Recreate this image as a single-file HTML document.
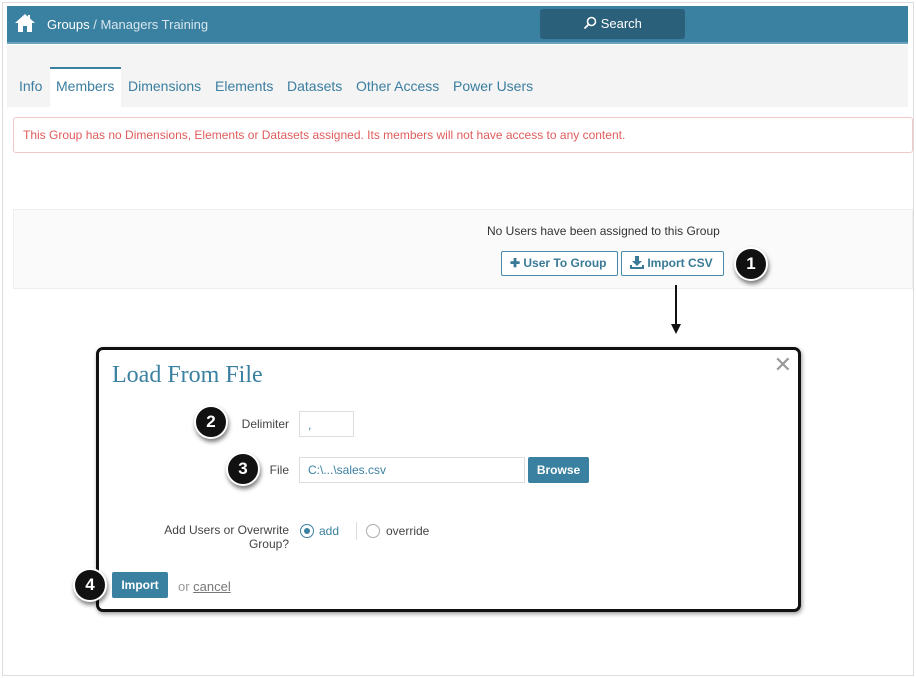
<!DOCTYPE html>
<html><head><style>
*{box-sizing:border-box;margin:0;padding:0}
body{width:916px;height:678px;background:#fff;font-family:"Liberation Sans",sans-serif;position:relative;overflow:hidden}
.frame{position:absolute;left:2px;top:2px;width:912px;height:674px;border:1px solid #ddd}
.hdr{position:absolute;left:7px;top:6px;width:901px;height:38px;background:#3a80a0;border-bottom:2px solid #6aa3bd}
.hdr .t{position:absolute;left:40px;top:11px;color:#fff;font-size:13px}
.hdr .t span{color:#d7e6ee}
.search{position:absolute;left:533px;top:3px;width:145px;height:30px;background:#2a6079;border-radius:3px;color:#fff;font-size:13px;text-align:center;line-height:30px}
.tabs{position:absolute;left:7px;top:45px;width:901px;height:62px;background:#f4f4f4}
.tab{position:absolute;top:33px;font-size:14px;color:#3a7ea0}
.act{position:absolute;left:43px;top:22px;width:71px;height:40px;background:#fff;border-top:2px solid #3a80a0}
.alert{position:absolute;left:13px;top:117px;width:900px;height:36px;border:1px solid #f0c8c8;border-radius:3px;color:#e05c5c;font-size:12px;padding:10px 9px}
.panel{position:absolute;left:13px;top:209px;width:900px;height:80px;background:#fafafa;border:1px solid #eee}
.btn{position:absolute;top:251px;height:25px;border:1px solid #4a8aaa;border-radius:2px;background:#fff;color:#3a7a98;font-size:12px;font-weight:bold;line-height:23px;padding-left:8px}
.num{position:absolute;width:34px;height:34px;border-radius:50%;background:#111;border:2px solid #fff;color:#fff;font-weight:bold;font-size:17px;text-align:center;line-height:30px;box-shadow:1px 3px 4px rgba(0,0,0,.5)}
.modal{position:absolute;left:96px;top:347px;width:705px;height:265px;border:3px solid #111;border-radius:7px;background:#fff;box-shadow:1px 2px 4px rgba(0,0,0,.4)}
.lbl{position:absolute;font-size:12px;color:#444;text-align:right}
.inp{position:absolute;border:1px solid #ddd;background:#fff;font-size:12px;color:#3a80a0}
.blue{position:absolute;background:#3a80a0;color:#fff;font-weight:bold;font-size:12px;text-align:center;border-radius:2px}
</style></head><body>
<div class="frame"></div>
<div class="hdr">
<svg style="position:absolute;left:7px;top:7px" width="22" height="20" viewBox="0 0 22 20"><path d="M11 1 L1 10 L4 10 L4 19 L9 19 L9 13 L13 13 L13 19 L18 19 L18 10 L21 10 L16 5.5 L16 2 L14 2 L14 3.7 Z" fill="#fff"/></svg>
<div class="t">Groups <span>/ Managers Training</span></div>
<div class="search"><svg width="14" height="14" viewBox="0 0 14 14" style="vertical-align:-2px"><circle cx="8.5" cy="5.5" r="4" fill="none" stroke="#fff" stroke-width="1.6"/><path d="M5.5 8.5 L1.5 12.5" stroke="#fff" stroke-width="1.8"/></svg> Search</div>
</div>
<div class="tabs">
<div class="act"></div>
<div class="tab" style="left:12px">Info</div>
<div class="tab" style="left:49px">Members</div>
<div class="tab" style="left:121px">Dimensions</div>
<div class="tab" style="left:208px">Elements</div>
<div class="tab" style="left:280px">Datasets</div>
<div class="tab" style="left:349px">Other Access</div>
<div class="tab" style="left:446px">Power Users</div>
</div>
<div class="alert">This Group has no Dimensions, Elements or Datasets assigned. Its members will not have access to any content.</div>
<div class="panel"></div>
<div style="position:absolute;left:487px;top:224px;font-size:12px;color:#333">No Users have been assigned to this Group</div>
<div class="btn" style="left:501px;width:117px">✚ User To Group</div>
<div class="btn" style="left:621px;width:103px"><svg width="14" height="13" viewBox="0 0 14 13" style="vertical-align:-2px"><path d="M5 0h4v5h3l-5 5-5-5h3z" fill="#3a7a98"/><path d="M0 9v4h14V9h-2v2H2V9z" fill="#3a7a98"/></svg> Import CSV</div>
<div class="num" style="left:734px;top:247px">1</div>
<div style="position:absolute;left:675px;top:285px;width:2px;height:42px;background:#111"></div>
<div style="position:absolute;left:671px;top:324px;border-left:5px solid transparent;border-right:5px solid transparent;border-top:10px solid #111"></div>
<div class="modal">
<div style="position:absolute;left:13px;top:12px;font-family:'Liberation Serif',serif;font-size:24px;color:#3a80a0">Load From File</div>
<div style="position:absolute;right:6px;top:2px;font-size:22px;color:#999">✕</div>
<div class="lbl" style="left:90px;top:67px;width:100px">Delimiter</div>
<div class="inp" style="left:200px;top:61px;width:55px;height:26px;padding:6px 8px">,</div>
<div class="lbl" style="left:120px;top:113px;width:70px">File</div>
<div class="inp" style="left:200px;top:107px;width:226px;height:26px;padding:5px 8px">C:\...\sales.csv</div>
<div class="blue" style="left:429px;top:107px;width:61px;height:26px;line-height:26px">Browse</div>
<div class="lbl" style="left:30px;top:173px;width:160px;line-height:14px">Add Users or Overwrite Group?</div>
<div style="position:absolute;left:201px;top:174px;width:14px;height:14px;border:1px solid #3a80a0;border-radius:50%"><div style="margin:3px;width:6px;height:6px;border-radius:50%;background:#3a80a0"></div></div>
<div style="position:absolute;left:220px;top:174px;font-size:12px;color:#3a80a0">add</div>
<div style="position:absolute;left:257px;top:172px;width:1px;height:18px;background:#ddd"></div>
<div style="position:absolute;left:267px;top:174px;width:14px;height:14px;border:1px solid #aaa;border-radius:50%"></div>
<div style="position:absolute;left:287px;top:174px;font-size:12px;color:#444">override</div>
<div class="blue" style="left:13px;top:222px;width:56px;height:26px;line-height:26px">Import</div>
<div style="position:absolute;left:79px;top:229px;font-size:13px;color:#999">or <u style="color:#777">cancel</u></div>
</div>
<div class="num" style="left:194px;top:405px">2</div>
<div class="num" style="left:226px;top:452px">3</div>
<div class="num" style="left:73px;top:568px">4</div>
</body></html>
